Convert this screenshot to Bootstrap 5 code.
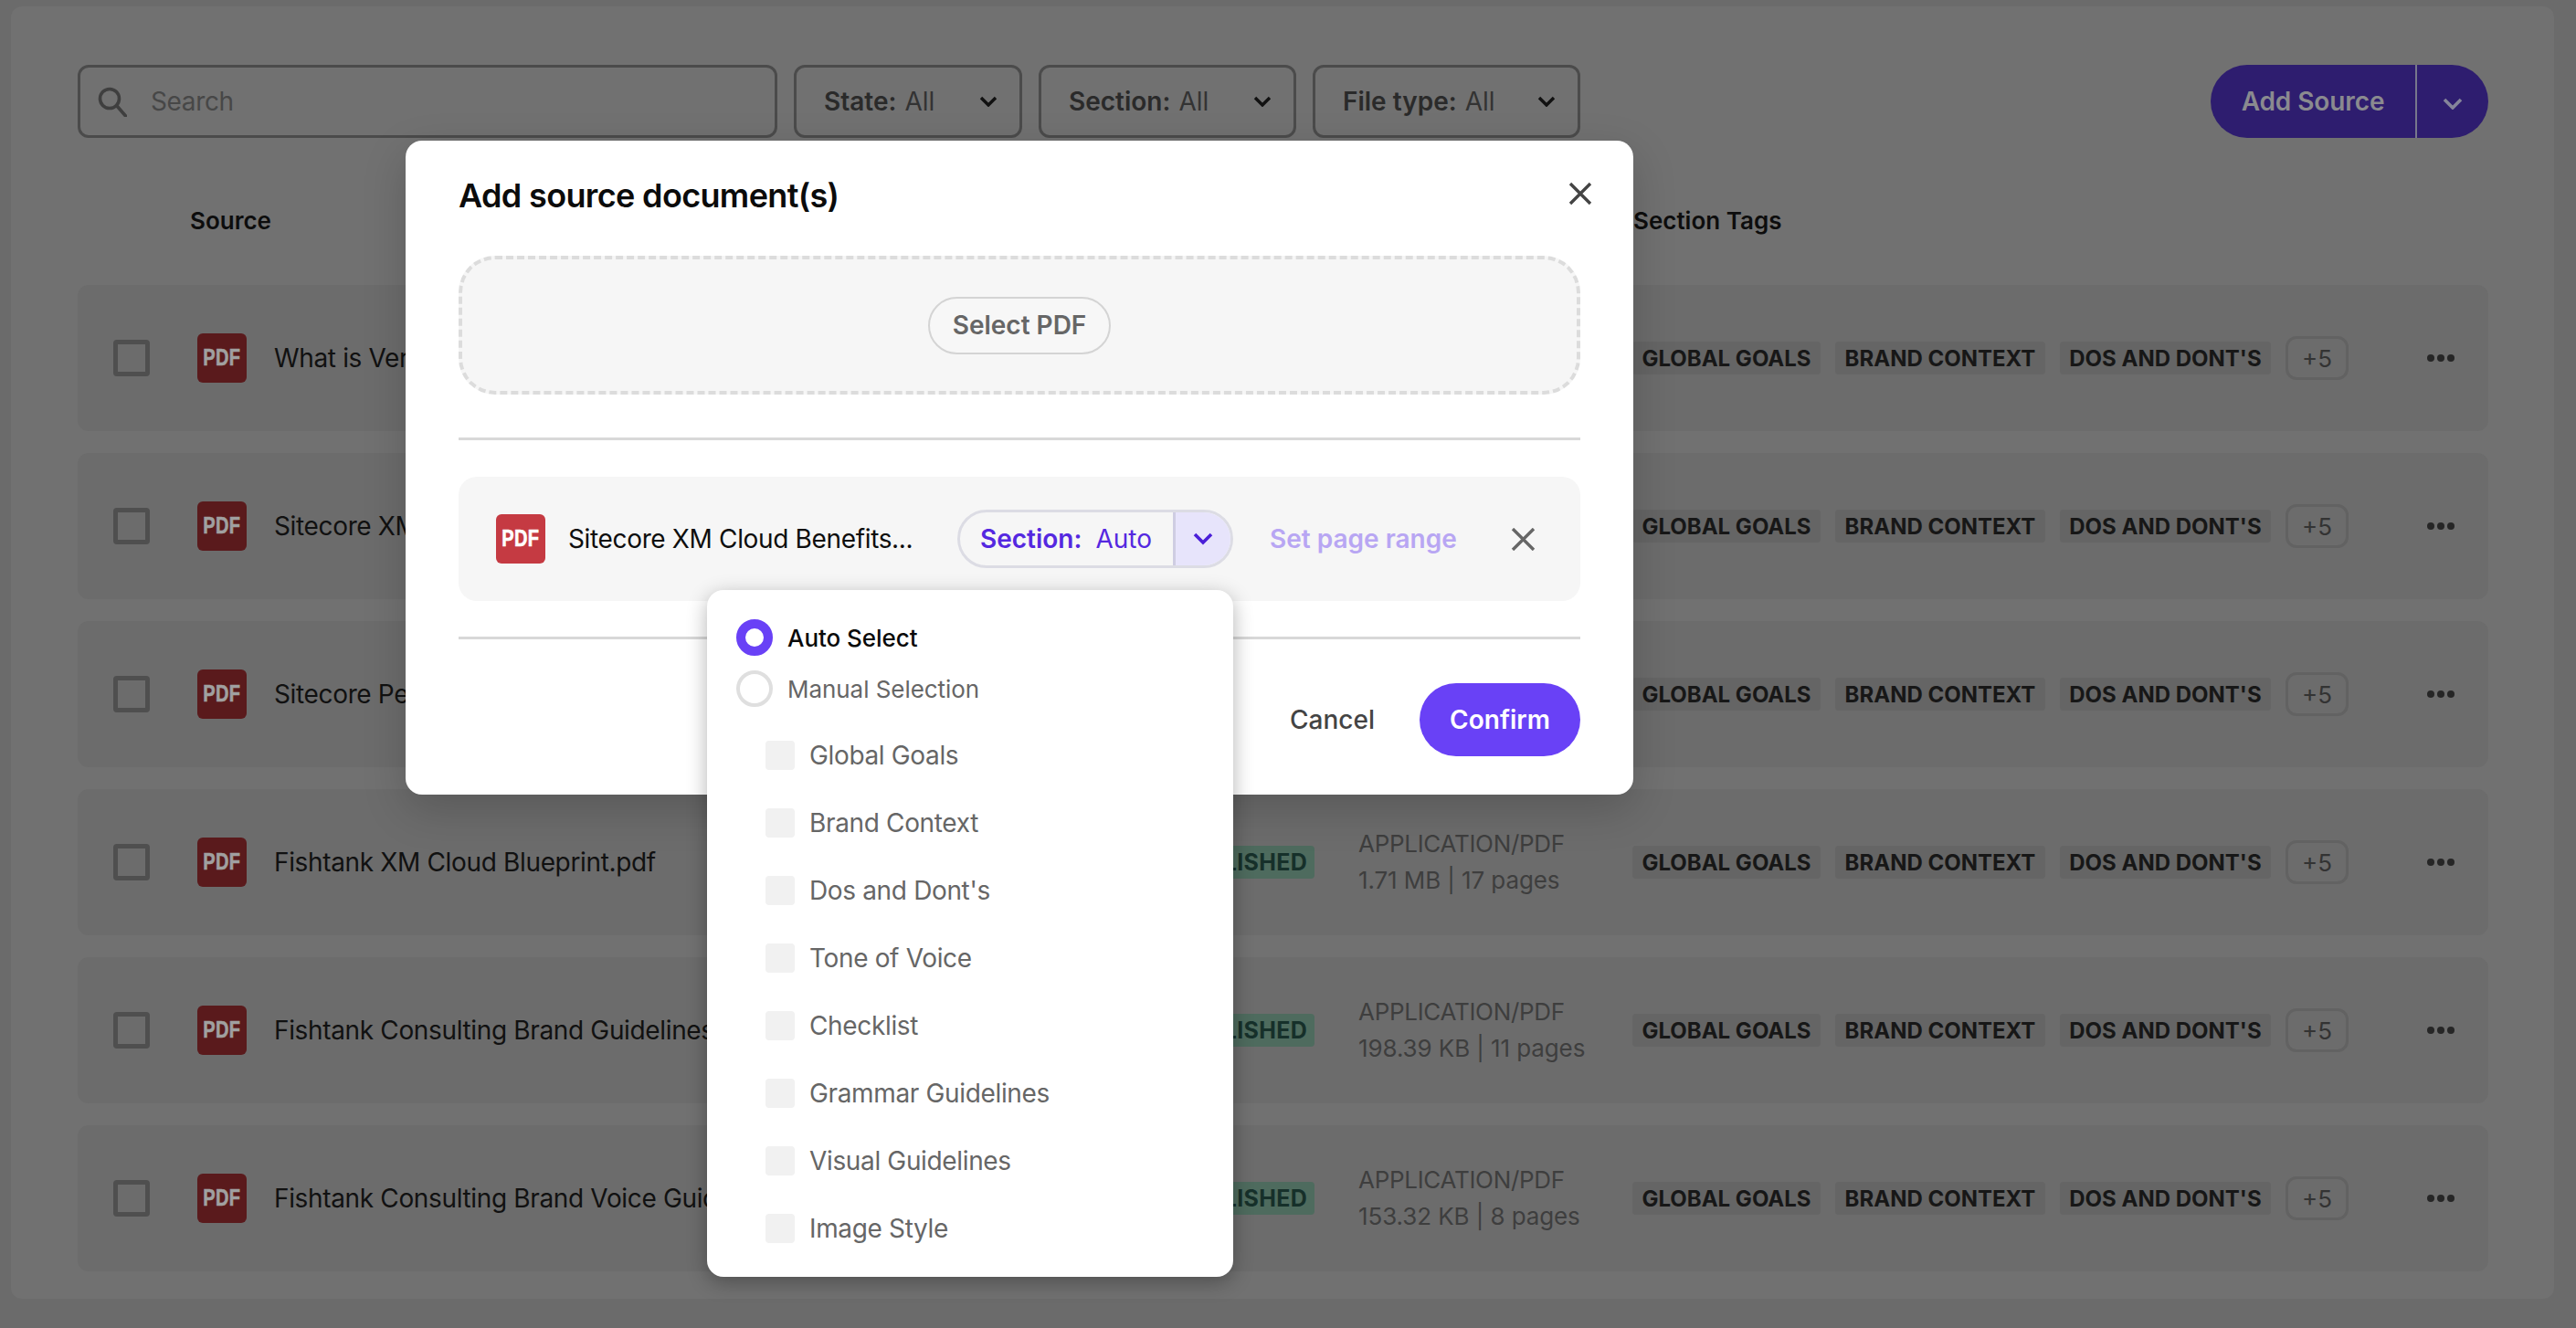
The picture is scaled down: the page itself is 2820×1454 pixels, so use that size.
<!doctype html>
<html lang="en">
<head>
<meta charset="utf-8">
<title>Add source document(s)</title>
<link href="https://cdn.jsdelivr.net/npm/bootstrap@5.3.0/dist/css/bootstrap.min.css" rel="stylesheet">
<style>
html,body{margin:0;height:100%;}
body{background:#6b6b6b;font-family:Inter,"Liberation Sans",sans-serif;width:2820px;height:1454px;overflow:hidden;position:relative;color:#111;}
.stage{margin:7px 24px 0 12px;height:1415px;background:#717171;border-radius:12px;padding:64px 72px 0 73px;overflow:hidden;}
.toolbar{height:80px;gap:18px;}
.searchbox{width:766px;height:80px;border:3px solid #4b4b4b;border-radius:12px;padding-left:19px;gap:26px;color:#474747;font-size:28px;letter-spacing:-.35px;}
.filterbtn{height:80px;border:3px solid #4b4b4b;border-radius:12px;padding:0 24px 0 30px;font-size:28px;color:#333;background:transparent;justify-content:space-between;}
.filterbtn b{font-weight:600;color:#2a2a2a;margin-right:9px;}
.filter1{width:250px;}
.filter2{width:282px;}
.filter3{width:293px;}
.splitadd{margin-left:auto;width:304px;height:80px;background:#2e1d6f;border-radius:40px;color:#8a8a8f;font-weight:600;font-size:28px;letter-spacing:-.1px;}
.splitadd .lbl{width:226px;text-align:center;border-right:2px solid #77778c;height:100%;line-height:80px;}
.splitadd .car{width:78px;text-align:center;}
.heads{height:90px;margin-top:71px;font-weight:600;font-size:26px;color:#0d0d0d;align-items:flex-start;}
.heads .hs{margin-left:123px;width:1580px;}
.rowcard{height:160px;margin-bottom:24px;background:#6c6c6c;border-radius:12px;padding:0 37px 0 39px;}
.cbx{width:40px;height:40px;border:5px solid #4f4f4f;border-radius:4px;margin-right:52px;flex:none;}
.pdfi{width:54px;height:54px;border-radius:6px;background:#5a1a1c;color:#a0a0a0;font-family:"Liberation Sans",sans-serif;font-weight:700;font-size:25px;letter-spacing:.5px;flex:none;-webkit-text-stroke:.6px currentColor;}
.pdfi span{display:block;transform:scaleX(.8);}
.rtitle{flex:1 1 0;min-width:0;margin-left:30px;font-size:28px;color:#111;white-space:nowrap;overflow:hidden;letter-spacing:-.35px;}
.statusb{background:#4e6b5e;color:#16302a;font-weight:700;font-size:25px;height:36px;line-height:36px;padding:0 8px;border-radius:4px;margin-right:48px;letter-spacing:.3px;}
.infoc{width:300px;flex:none;font-size:26px;line-height:40px;color:#3e3e3e;letter-spacing:-.1px;}
.infoc span{letter-spacing:-.3px;}
.tagc{gap:16px;flex:none;margin-right:86px;}
.tagx{background:#656565;color:#171717;font-weight:700;font-size:24px;height:36px;line-height:37px;border-radius:4px;white-space:nowrap;text-align:center;}
.tagw1{width:206px;}
.tagw2{width:230px;}
.tagw3{width:231px;}
.morex{width:69px;height:48px;border:3px solid #626262;border-radius:12px;font-size:26px;color:#333;}
.dots{margin-left:auto;width:30px;gap:3px;flex:none;}
.dots i{width:8px;height:8px;border-radius:50%;background:#262626;display:block;}
/* modal */
.mdl{position:absolute;left:444px;top:154px;width:1344px;height:716px;background:#fff;border-radius:18px;box-shadow:0 16px 48px rgba(0,0,0,.18);padding:0 58px;}
.mhead{height:126px;padding-bottom:4px;}
.mhead h5{font-size:36px;font-weight:600;color:#0b0b0b;margin:0;letter-spacing:-.65px;}
.mclose{margin-right:-13px;margin-bottom:6px;}
.dropz{height:152px;border:4px dashed #dcdcdc;border-radius:40px;background:#f6f6f6;}
.selbtn{width:200px;height:63px;border:2px solid #d4d4d4;border-radius:32px;background:#f7f7f7;color:#666;font-weight:600;font-size:28px;}
.mrule{height:3px;background:#d8d8d8;}
.mrule1{margin-top:47px;}
.filerow{height:136px;background:#f6f6f6;border-radius:20px;padding:0 49px 0 41px;margin:40px 0 39px;}
.pdfb{background:#c53a42;color:#fff;}
.ftitle{font-size:28px;color:#0e0e0e;margin-left:25px;width:426px;white-space:nowrap;letter-spacing:-.35px;}
.sect{width:302px;height:64px;border:3px solid #dcdce4;border-radius:32px;overflow:hidden;font-size:28px;color:#5528e0;}
.sect .sl{flex:1;padding-left:22px;gap:15px;}
.sect b{font-weight:600;}
.sect .sr{width:63px;height:100%;background:#e7e4fb;border-left:3px solid #cfcde2;}
.setr{margin-left:40px;color:#b8a6f3;font-weight:600;font-size:28px;white-space:nowrap;}
.fx{margin-left:auto;}
.mfoot{justify-content:flex-end;margin-top:48px;}
.cancelb{color:#444;font-weight:500;font-size:28px;margin-right:49px;}
.confirmb{width:176px;height:80px;border-radius:40px;background:#6941f6;color:#fff;font-weight:600;font-size:28px;}
/* dropdown */
.pop{position:absolute;left:774px;top:646px;width:576px;height:752px;background:#fff;border-radius:18px;box-shadow:0 6px 22px rgba(0,0,0,.3);padding:32px 32px 0;}
.rdo{width:40px;height:40px;border-radius:50%;flex:none;}
.rdo.on{border:10px solid #6941f6;}
.rdo.off{border:4px solid #dfdfdf;}
.rline{height:40px;margin-bottom:16px;gap:16px;font-size:26px;color:#666;letter-spacing:-.05px;}
.rline.act{color:#0a0a0a;font-weight:500;}
.chkl{margin-top:37px;padding-left:32px;}
.chkr{height:32px;margin-bottom:42px;gap:16px;font-size:28px;color:#666;letter-spacing:-.35px;}
.chkb{width:32px;height:32px;background:#f1f1f1;border-radius:4px;flex:none;}
</style>
</head>
<body>
<main class="stage">
  <div class="d-flex toolbar">
    <div class="d-flex align-items-center searchbox">
      <svg width="32" height="33" viewBox="0 0 32 33" fill="none" stroke="#3f3f3f" stroke-width="3.6"><circle cx="13" cy="13" r="10.5"/><path d="M21 21l9.5 11" stroke-linecap="round"/></svg>
      <span>Search</span>
    </div>
    <div class="d-flex align-items-center filterbtn filter1"><span><b>State:</b>All</span><svg width="20" height="12" viewBox="0 0 20 12" fill="none" stroke="#111" stroke-width="3.4"><path d="M2 2l8 8 8-8"/></svg></div>
    <div class="d-flex align-items-center filterbtn filter2"><span><b>Section:</b>All</span><svg width="20" height="12" viewBox="0 0 20 12" fill="none" stroke="#111" stroke-width="3.4"><path d="M2 2l8 8 8-8"/></svg></div>
    <div class="d-flex align-items-center filterbtn filter3"><span><b>File type:</b>All</span><svg width="20" height="12" viewBox="0 0 20 12" fill="none" stroke="#111" stroke-width="3.4"><path d="M2 2l8 8 8-8"/></svg></div>
    <div class="d-flex align-items-center splitadd"><div class="lbl">Add Source</div><div class="car"><svg width="22" height="13" viewBox="0 0 22 13" fill="none" stroke="#85859a" stroke-width="3.6"><path d="M2 2l9 9 9-9"/></svg></div></div>
  </div>
  <div class="d-flex heads"><div class="hs">Source</div><div>Section Tags</div></div>
  <div id="rows"></div>
</main>

<section class="mdl">
  <div class="d-flex align-items-center justify-content-between mhead">
    <h5>Add source document(s)</h5>
    <svg class="mclose" width="26" height="26" viewBox="0 0 26 26" fill="none" stroke="#444" stroke-width="3.4"><path d="M2 2l22 22M24 2L2 24"/></svg>
  </div>
  <div class="d-flex align-items-center justify-content-center dropz"><div class="d-flex align-items-center justify-content-center selbtn">Select PDF</div></div>
  <div class="mrule mrule1"></div>
  <div class="d-flex align-items-center filerow">
    <div class="d-flex align-items-center justify-content-center pdfi pdfb"><span>PDF</span></div>
    <div class="ftitle">Sitecore XM Cloud Benefits...</div>
    <div class="d-flex align-items-center sect"><div class="d-flex sl"><b>Section:</b><span>Auto</span></div><div class="d-flex align-items-center justify-content-center sr"><svg width="22" height="14" viewBox="0 0 22 14" fill="none" stroke="#4a1fd8" stroke-width="3.6"><path d="M2 2l9 9 9-9"/></svg></div></div>
    <div class="setr">Set page range</div>
    <svg class="fx" width="27" height="25" viewBox="0 0 27 25" fill="none" stroke="#666" stroke-width="3.4"><path d="M2 1l23 23M25 1L2 24"/></svg>
  </div>
  <div class="mrule"></div>
  <div class="d-flex align-items-center mfoot">
    <div class="cancelb">Cancel</div>
    <div class="d-flex align-items-center justify-content-center confirmb">Confirm</div>
  </div>
</section>

<aside class="pop">
  <div class="d-flex align-items-center rline act"><span class="rdo on"></span>Auto Select</div>
  <div class="d-flex align-items-center rline"><span class="rdo off"></span>Manual Selection</div>
  <div class="chkl" id="chks"></div>
</aside>

<script>
const rows=[
["What is Vercel.pdf","1.2 MB | 10 pages"],
["Sitecore XM Cloud Benefits.pdf","900 KB | 6 pages"],
["Sitecore Personalize Guide.pdf","1.1 MB | 9 pages"],
["Fishtank XM Cloud Blueprint.pdf","1.71 MB | 17 pages"],
["Fishtank Consulting Brand Guidelines.pdf","198.39 KB | 11 pages"],
["Fishtank Consulting Brand Voice Guidelines.pdf","153.32 KB | 8 pages"]];
document.getElementById('rows').innerHTML=rows.map(r=>`<div class="d-flex align-items-center rowcard">
<span class="cbx"></span><span class="d-flex align-items-center justify-content-center pdfi"><span>PDF</span></span>
<div class="rtitle">${r[0]}</div><div class="statusb">PUBLISHED</div>
<div class="infoc"><span>APPLICATION/PDF</span><br>${r[1]}</div>
<div class="d-flex align-items-center tagc"><span class="tagx tagw1">GLOBAL GOALS</span><span class="tagx tagw2">BRAND CONTEXT</span><span class="tagx tagw3">DOS AND DONT'S</span><span class="d-flex align-items-center justify-content-center morex">+5</span></div>
<div class="d-flex dots"><i></i><i></i><i></i></div></div>`).join('');
document.getElementById('chks').innerHTML=["Global Goals","Brand Context","Dos and Dont's","Tone of Voice","Checklist","Grammar Guidelines","Visual Guidelines","Image Style"].map(t=>`<div class="d-flex align-items-center chkr"><span class="chkb"></span>${t}</div>`).join('');
</script>
<script src="https://cdn.jsdelivr.net/npm/bootstrap@5.3.0/dist/js/bootstrap.bundle.min.js"></script>
</body>
</html>
